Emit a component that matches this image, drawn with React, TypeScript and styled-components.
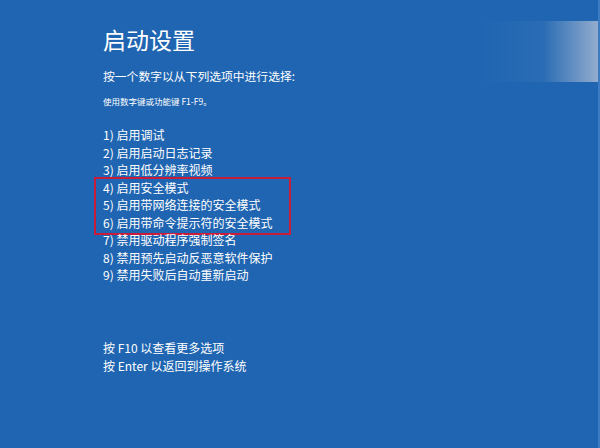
import React from "react";
import styled, { createGlobalStyle } from "styled-components";

const GlobalStyle = createGlobalStyle`
  html, body { margin: 0; padding: 0; background: #1f65b1; }
  body { font-family: "Noto Sans CJK SC", "Noto Sans", sans-serif; }
`;

const Screen = styled.div`
  position: relative;
  width: 600px;
  height: 448px;
  box-sizing: border-box;
  background: #1f65b1;
  color: #ffffff;
  padding: 26px 0 0 103px;
  display: flex;
  flex-direction: column;
  overflow: hidden;
`;

const Title = styled.h1`
  margin: 0;
  font-size: 23px;
  font-weight: 400;
  line-height: 26px;
`;

const Prompt = styled.div`
  margin-top: 15px;
  font-size: 11.8px;
  line-height: 17px;
`;

const Hint = styled.div`
  margin-top: 11px;
  font-size: 8.5px;
  line-height: 12px;
`;

const OptionList = styled.div`
  margin-top: 19px;
  display: flex;
  flex-direction: column;
`;

const Option = styled.div`
  font-size: 12px;
  line-height: 17.5px;
  white-space: nowrap;
`;

const Highlight = styled.div`
  align-self: flex-start;
  margin: -2px 0 -4px -9px;
  padding: 0 17px 2px 7px;
  border: 2px solid #c81c3a;
  display: flex;
  flex-direction: column;
`;

const Footer = styled.div`
  margin-top: 55px;
  display: flex;
  flex-direction: column;
`;

const FooterLine = styled.div`
  font-size: 12px;
  line-height: 18px;
`;

const Glare = styled.div`
  position: absolute;
  top: 21px;
  right: 2px;
  width: 120px;
  height: 61px;
  background: linear-gradient(
    to right,
    rgba(255, 255, 255, 0) 0%,
    rgba(255, 255, 255, 0.05) 55%,
    rgba(225, 220, 225, 0.6) 100%
  );
`;

const EdgeLine = styled.div`
  position: absolute;
  top: 0;
  right: 0;
  width: 2px;
  height: 100%;
  background: #3d7cc2;
`;

const before = ["1) 启用调试", "2) 启用启动日志记录", "3) 启用低分辨率视频"];
const highlighted = [
  "4) 启用安全模式",
  "5) 启用带网络连接的安全模式",
  "6) 启用带命令提示符的安全模式",
];
const after = [
  "7) 禁用驱动程序强制签名",
  "8) 禁用预先启动反恶意软件保护",
  "9) 禁用失败后自动重新启动",
];

export default function App() {
  return (
    <>
      <GlobalStyle />
      <Screen>
        <Title>启动设置</Title>
        <Prompt>按一个数字以从下列选项中进行选择:</Prompt>
        <Hint>使用数字键或功能键 F1-F9。</Hint>
        <OptionList>
          {before.map((t) => (
            <Option key={t}>{t}</Option>
          ))}
          <Highlight>
            {highlighted.map((t) => (
              <Option key={t}>{t}</Option>
            ))}
          </Highlight>
          {after.map((t) => (
            <Option key={t}>{t}</Option>
          ))}
        </OptionList>
        <Footer>
          <FooterLine>按 F10 以查看更多选项</FooterLine>
          <FooterLine>按 Enter 以返回到操作系统</FooterLine>
        </Footer>
        <Glare />
        <EdgeLine />
      </Screen>
    </>
  );
}
